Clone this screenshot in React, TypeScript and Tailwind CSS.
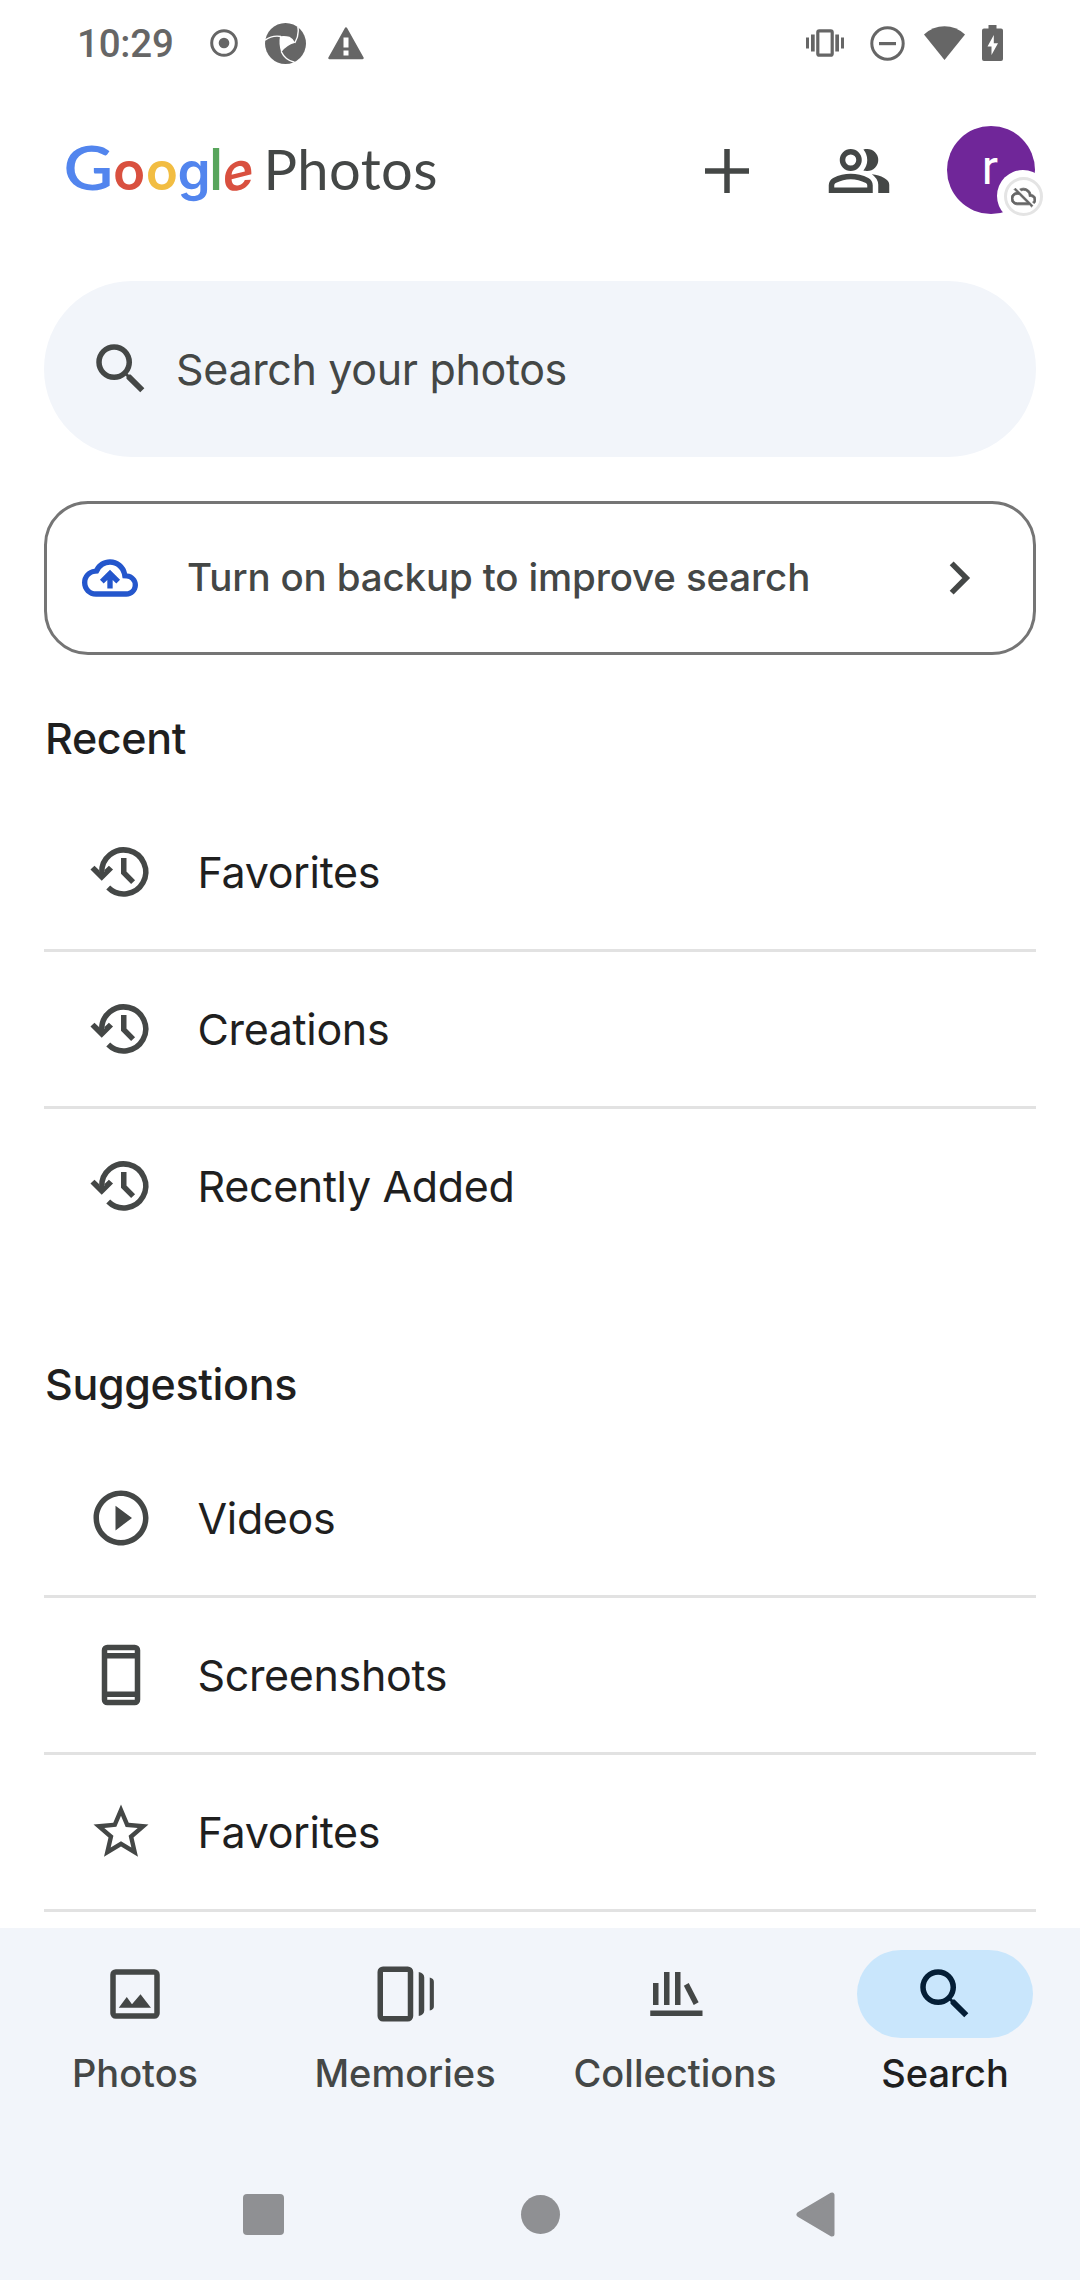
import type { ReactNode } from "react";

const ICON = "h-[66px] w-[66px] shrink-0 fill-current";

function Icon({ d }: { d: string }) {
  return (
    <svg viewBox="0 0 24 24" className={ICON}>
      <path d={d} />
    </svg>
  );
}

const SEARCH =
  "M15.5 14h-.79l-.28-.27A6.471 6.471 0 0 0 16 9.5 6.5 6.5 0 1 0 9.5 16c1.61 0 3.09-.59 4.23-1.57l.27.28v.79l5 4.99L20.49 19l-4.99-5zm-6 0C7.01 14 5 11.99 5 9.5S7.01 5 9.5 5 14 7.01 14 9.5 11.99 14 9.5 14z";
const PEOPLE =
  "M1 20v-2.8q0-.85.438-1.562.437-.713 1.162-1.088 1.55-.775 3.15-1.163Q7.35 13 9 13t3.25.387q1.6.388 3.15 1.163.725.375 1.162 1.088Q17 16.35 17 17.2V20Zm18 0v-3q0-1.1-.612-2.113-.613-1.012-1.738-1.737 1.275.15 2.4.512 1.125.363 2.1.888.9.5 1.375 1.112Q23 16.275 23 17v3ZM9 12q-1.65 0-2.825-1.175Q5 9.65 5 8q0-1.65 1.175-2.825Q7.35 4 9 4q1.65 0 2.825 1.175Q13 6.35 13 8q0 1.65-1.175 2.825Q10.65 12 9 12Zm10-4q0 1.65-1.175 2.825Q16.65 12 15 12q-.275 0-.7-.062-.425-.063-.7-.138.675-.8 1.037-1.775Q15 9.05 15 8q0-1.05-.363-2.025Q14.275 5 13.6 4.2q.35-.125.7-.163Q14.65 4 15 4q1.65 0 2.825 1.175Q19 6.35 19 8ZM3 18h12v-.8q0-.275-.137-.5-.138-.225-.363-.35-1.35-.675-2.725-1.013Q10.4 15 9 15t-2.775.337Q4.85 15.675 3.5 16.35q-.225.125-.362.35-.138.225-.138.5Zm6-8q.825 0 1.413-.588Q11 8.825 11 8t-.587-1.412Q9.825 6 9 6q-.825 0-1.412.588Q7 7.175 7 8t.588 1.412Q8.175 10 9 10Z";
const PLAY =
  "M10 16.5l6-4.5-6-4.5v9zM12 2C6.48 2 2 6.48 2 12s4.48 10 10 10 10-4.48 10-10S17.52 2 12 2zm0 18c-4.41 0-8-3.59-8-8s3.59-8 8-8 8 3.59 8 8-3.59 8-8 8z";
const STAR =
  "M22 9.24l-7.19-.62L12 2 9.19 8.63 2 9.24l5.46 4.73L5.82 21 12 17.27 18.18 21l-1.63-7.03L22 9.24zM12 15.4l-3.76 2.27 1-4.28-3.32-2.88 4.38-.38L12 6.1l1.71 4.04 4.38.38-3.32 2.88 1 4.28L12 15.4z";
const CLOUD =
  "M19.35 10.04A7.49 7.49 0 0 0 12 4C9.11 4 6.6 5.64 5.35 8.04A5.994 5.994 0 0 0 0 14c0 3.31 2.69 6 6 6h13c2.76 0 5-2.24 5-5 0-2.64-2.05-4.78-4.65-4.96zM19 17.7H6c-2.21 0-3.7-1.65-3.7-3.7 0-2.05 1.43-3.6 3.46-3.77l1.2-.11.5-.95A5.2 5.2 0 0 1 12 6.3c2.52 0 4.58 1.76 5.09 4.13l.3 1.7 1.73.11A2.75 2.75 0 0 1 21.7 15c0 1.6-1.15 2.7-2.7 2.7zM12 8.5 16.3 12.8 14.7 14.4 13.15 12.9V16.5h-2.3V12.9L9.3 14.4 7.7 12.8Z";
const CLOUD_OFF =
  "M19.35 10.04A7.49 7.49 0 0 0 12 4c-1.33 0-2.57.36-3.65.97l1.49 1.49C10.51 6.17 11.23 6 12 6c3.04 0 5.5 2.46 5.5 5.5v.5H19a2.996 2.996 0 0 1 1.79 5.4l1.41 1.41C23.29 17.9 24 16.53 24 15c0-2.64-2.05-4.78-4.65-4.96zM3 5.27l2.75 2.74C2.56 8.15 0 10.77 0 14c0 3.31 2.69 6 6 6h11.73l2 2L21 20.73 4.27 4 3 5.27zM7.73 10l8 8H6c-2.21 0-4-1.79-4-4s1.79-4 4-4h1.73z";

const HistoryIcon = () => (
  <svg viewBox="0 0 24 24" className={ICON}>
    <path d="M7.350 17.650A8 8 0 1 0 5 12.300" fill="none" stroke="currentColor" strokeWidth="2" />
    <path d="M5 15.200.900 11.100 2.350 9.700 4 11.300V12h2v-.700L7.600 9.700 9.100 11.100z" />
    <path d="M13 6.900v5.300l3.400 3.500" fill="none" stroke="currentColor" strokeWidth="2" />
  </svg>
);

const PhoneIcon = () => (
  <svg viewBox="0 0 24 24" className={ICON}>
    <path
      fillRule="evenodd"
      d="M7 1h10a2 2 0 0 1 2 2v18a2 2 0 0 1-2 2H7a2 2 0 0 1-2-2V3a2 2 0 0 1 2-2zM7 3v1h10V3zM7 6v12h10V6zM7 20v1h10v-1z"
    />
  </svg>
);

const PhotosIcon = () => (
  <svg viewBox="0 0 24 24" className={ICON}>
    <rect x="4" y="4" width="16" height="16" rx="1" fill="none" stroke="currentColor" strokeWidth="2" />
    <path d="M6.1 17 9 13.1l1.9 2.6 3.1-3.6 3.8 4.9z" />
  </svg>
);

const MemoriesIcon = () => (
  <svg viewBox="0 0 24 24" className={ICON}>
    <rect x="3" y="3" width="11" height="18" rx="1" fill="none" stroke="currentColor" strokeWidth="2" />
    <path d="M17 4q2 .5 2 2v12q0 1.500-2 2zM21 6q1.500.4 1.500 1.500v9q0 1.100-1.500 1.500z" />
  </svg>
);

const CollectionsIcon = () => (
  <svg viewBox="0 0 24 24" className={ICON}>
    <path d="M3 18h19v2H3zM4 8h2v8H4zM8 4h2v12H8zM12 4h2v12h-2z" />
    <path d="m16.100 8.500 3.600 7" fill="none" stroke="currentColor" strokeWidth="2" />
  </svg>
);

function StatusBar() {
  return (
    <div className="flex h-[86px] shrink-0 items-center pr-[77px] pl-[77px] text-[#666]">
      <span className="w-[99px] pt-0.5 font-['Roboto',sans-serif] text-[38.500px] leading-none font-medium tracking-[-0.2px]">
        10:29
      </span>
      <svg viewBox="0 0 28 28" className="ml-[34px] size-7">
        <circle cx="14" cy="14" r="12.300" fill="none" stroke="currentColor" strokeWidth="3" />
        <circle cx="14" cy="14" r="5.300" fill="currentColor" />
      </svg>
      <svg viewBox="0 0 41 41" className="ml-[27px] size-[41px]">
        <circle cx="20.500" cy="20.500" r="20.500" fill="currentColor" />
        <path d="M15 13.300q5-.8 9.500.5 4 2 5.700 6Q21 22.500 16.200 29.300 13.500 21 15 13.300z" fill="#fff" />
        <path
          d="M0 17.200Q7 12 16 13.500M29.800 20Q34.500 12 32.800 3.500M16.200 28.500Q20 37 29.500 39.300"
          fill="none"
          stroke="#fff"
          strokeWidth="1.400"
        />
      </svg>
      <svg viewBox="0 0 36 33" className="ml-[22px] h-[33px] w-9">
        <path d="M18 1.500 34.500 31h-33z" fill="currentColor" stroke="currentColor" strokeWidth="2.500" strokeLinejoin="round" />
        <path d="M15.500 10.500h5v10h-5zM15.500 23.500h5v5h-5z" fill="#fff" />
      </svg>
      <svg viewBox="0 0 38 28" className="ml-auto h-7 w-[38px] fill-current">
        <rect x="11.800" y="1.800" width="14.400" height="24.400" rx="1.500" fill="none" stroke="currentColor" strokeWidth="3.200" />
        <path d="M0 8.500h3v11H0zM5 5.500h3.700v17H5zM29.300 5.500H33v17h-3.700zM35 8.500h3v11h-3z" />
      </svg>
      <svg viewBox="0 0 35 35" className="ml-[26px] size-[35px]">
        <circle cx="17.500" cy="17.500" r="15.700" fill="none" stroke="currentColor" strokeWidth="3" />
        <path d="M9 16h17v3.200H9z" fill="currentColor" />
      </svg>
      <svg viewBox="0 0 41 34" className="ml-[19px] h-[34px] w-[41px] fill-current">
        <path d="M0 8.500Q9 .3 20.500.3T41 8.500L20.500 34z" />
      </svg>
      <svg viewBox="0 0 21 36" className="ml-[17px] h-9 w-[21px] fill-current">
        <path fillRule="evenodd" d="M6.500 0h8v3.500h4.500a2 2 0 0 1 2 2V34a2 2 0 0 1-2 2H2a2 2 0 0 1-2-2V5.500a2 2 0 0 1 2-2h4.500zM11.800 10 5.500 21.500h4V30L16 18.300h-4.200z" />
      </svg>
    </div>
  );
}

function Header() {
  return (
    <header className="flex h-[170px] shrink-0 items-center pr-[45px] pl-16 text-[#444746]">
      <div className="flex items-baseline pb-[5px] font-['Inter',sans-serif] leading-[60px] font-medium">
        <span className="flex w-[49px] scale-x-[1.12] justify-center font-['Lato',sans-serif] text-[61px] font-semibold text-[#5285ee]">
          G
        </span>
        <span className="flex w-[32.500px] justify-center text-[53px] font-semibold text-[#d9503f]">o</span>
        <span className="flex w-[33px] justify-center text-[53px] font-semibold text-[#f2bd42]">o</span>
        <span className="flex w-[31px] justify-center text-[53px] font-semibold text-[#5285ee]">g</span>
        <span className="flex w-[13px] justify-center text-[58px] font-medium text-[#58a55c]">l</span>
        <span className="flex w-[30px] skew-y-[-14deg] justify-center text-[52px] leading-[24px] font-semibold text-[#d9503f]">e</span>
        <span className="ml-[11px] font-['Lato',sans-serif] text-[56px] font-normal tracking-[0.4px]">Photos</span>
      </div>
      <svg viewBox="0 0 24 24" className="ml-auto h-[66px] w-[66px] fill-current">
        <path d="M11 4h2v7h7v2h-7v7h-2v-7H4v-2h7z" />
      </svg>
      <div className="ml-[66px]">
        <Icon d={PEOPLE} />
      </div>
      <div className="relative ml-[55px] flex size-[88px] -translate-y-px items-center justify-center rounded-full bg-[#702699] font-['Roboto',sans-serif] text-[48px] leading-none text-white">
        <span className="-translate-x-px -translate-y-0.5">r</span>
        <span className="absolute top-[44px] left-[50px] flex size-[52px] items-center justify-center rounded-full bg-white">
          <span className="flex size-[39px] items-center justify-center rounded-full border-[3px] border-[#e4e4e4] text-[#666]">
            <svg viewBox="0 0 24 24" className="size-[25px] shrink-0 fill-current stroke-current stroke-[0.8]">
              <path d={CLOUD_OFF} />
            </svg>
          </span>
        </span>
      </div>
    </header>
  );
}

function Section({ title, rows }: { title: string; rows: [ReactNode, string][] }) {
  return (
    <section className="mx-11">
      <h2 className="h-28 pt-[30px] pl-px text-[43px] leading-[50px] font-medium tracking-[-0.35px]">{title}</h2>
      {rows.map(([icon, label], i) => (
        <div
          key={i}
          className="flex h-[157px] items-center border-b-[3px] border-[#e2e2e2] pl-11 last:border-transparent data-[last=true]:border-[#e2e2e2]"
          data-last={title === "Suggestions"}
        >
          <span className="text-[#444746]">{icon}</span>
          <span className="ml-[43.500px] text-[43px] leading-[50px] tracking-[-0.35px]">{label}</span>
        </div>
      ))}
    </section>
  );
}

const NAV: [ReactNode, string][] = [
  [<PhotosIcon />, "Photos"],
  [<MemoriesIcon />, "Memories"],
  [<CollectionsIcon />, "Collections"],
  [<Icon d={SEARCH} />, "Search"],
];

export default function App() {
  return (
    <div className="flex h-[2280px] w-[1080px] flex-col overflow-hidden bg-white font-['Inter',sans-serif] text-[#1f1f1f]">
      <StatusBar />
      <Header />
      <main className="h-[1672px] shrink-0 overflow-hidden">
        <div className="mx-11 mt-[25px] flex h-44 items-center rounded-full bg-[#f2f5fa] pl-11 text-[#444746]">
          <Icon d={SEARCH} />
          <span className="ml-[22px] text-[43px] leading-[50px] tracking-[-0.35px]">Search your photos</span>
        </div>
        <div className="mx-11 mt-11 flex h-[154px] items-center rounded-[44px] border-[3px] border-[#757575] pr-[39px] pl-[35px] text-[#444746]">
          <svg viewBox="0 0 24 24" className="size-14 shrink-0 fill-[#2456cc]">
            <path d={CLOUD} />
          </svg>
          <span className="ml-[49px] pb-0.5 text-[38.500px] leading-[50px] font-medium tracking-[-0.15px]">
            Turn on backup to improve search
          </span>
          <svg viewBox="0 0 24 24" className="ml-auto size-[66px] fill-none stroke-current stroke-2">
            <path d="m8.600 6.700 5.300 5.300-5.300 5.300" />
          </svg>
        </div>
        <div className="pt-7">
          <Section
            title="Recent"
            rows={[
              [<HistoryIcon />, "Favorites"],
              [<HistoryIcon />, "Creations"],
              [<HistoryIcon />, "Recently Added"],
            ]}
          />
          <div className="h-[63px]" />
          <Section
            title="Suggestions"
            rows={[
              [<Icon d={PLAY} />, "Videos"],
              [<PhoneIcon />, "Screenshots"],
              [<Icon d={STAR} />, "Favorites"],
            ]}
          />
        </div>
      </main>
      <footer className="h-[352px] shrink-0 bg-[#f2f5fa] pt-[22px]">
        <nav className="grid grid-cols-4">
          {NAV.map(([icon, label]) => (
            <div
              key={label}
              className="group flex flex-col items-center text-[#444746] data-[active=true]:text-[#1f1f1f]"
              data-active={label === "Search"}
            >
              <span className="flex h-[88px] w-44 items-center justify-center rounded-full group-data-[active=true]:bg-[#c9e6fc] group-data-[active=true]:text-[#041e36]">
                {icon}
              </span>
              <span className="mt-[10px] text-[38px] leading-[50px] font-medium">{label}</span>
            </div>
          ))}
        </nav>
        <div className="flex h-[232px] items-center gap-[236.500px] pl-[243px] text-[#8f9093]">
          <span className="size-[41px] rounded bg-current" />
          <span className="size-[39px] rounded-full bg-current" />
          <svg viewBox="0 0 39 45" className="h-[45px] w-[39px] fill-current stroke-current">
            <path d="M3 22.500 36 3v39z" strokeWidth="5" strokeLinejoin="round" />
          </svg>
        </div>
      </footer>
    </div>
  );
}
